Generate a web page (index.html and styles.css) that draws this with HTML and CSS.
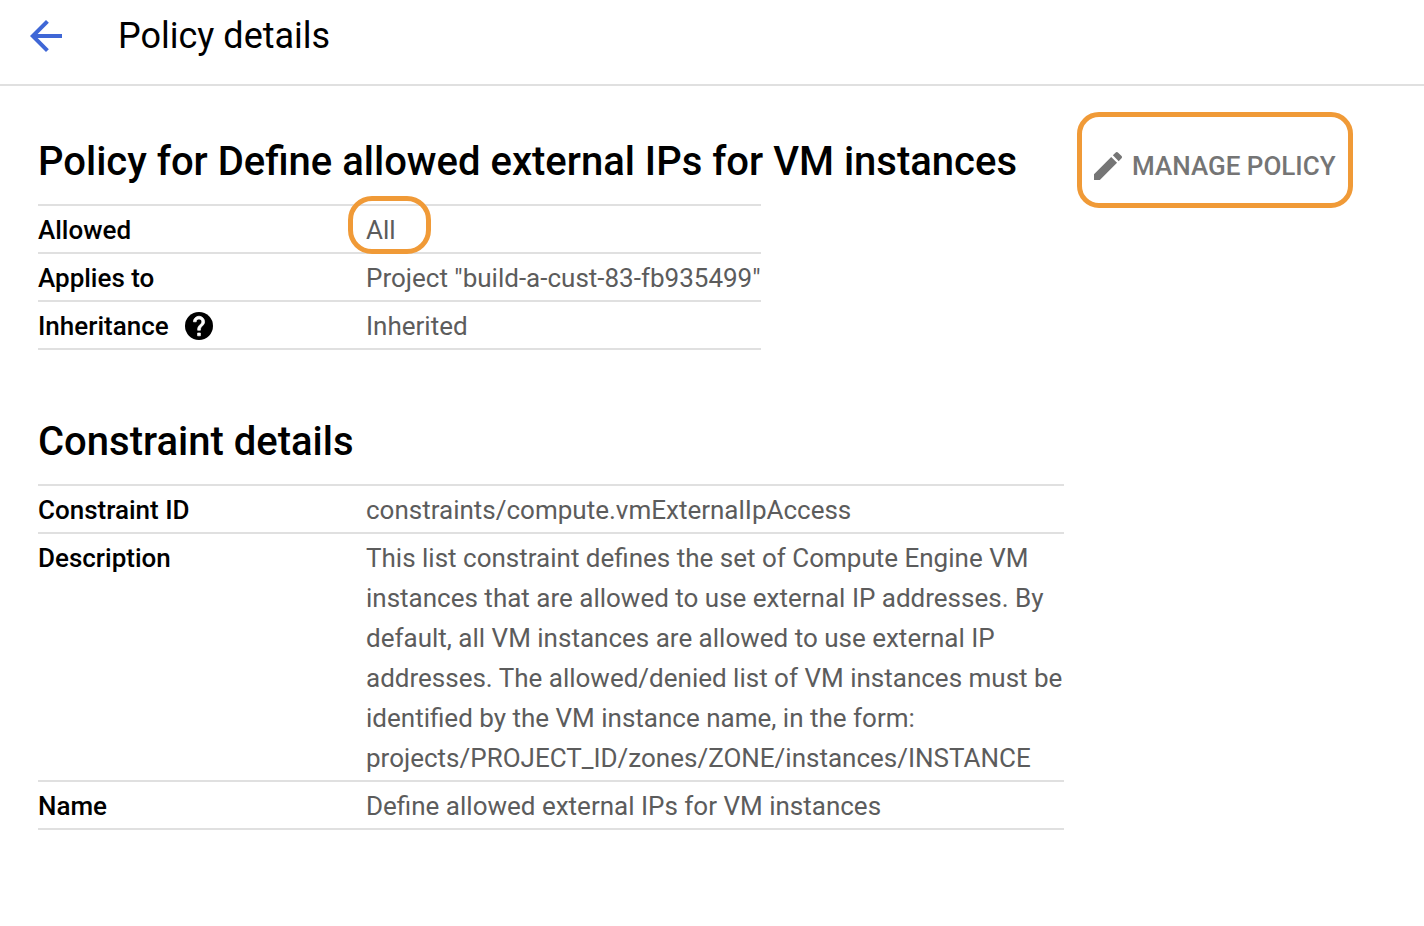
FILE: index.html
```html
<!DOCTYPE html>
<html lang="en">
<head>
<meta charset="utf-8">
<title>Policy details</title>
<link rel="stylesheet" href="styles.css">
</head>
<body>
<header class="topbar">
  <a class="back" href="#" aria-label="Back">
    <svg width="32" height="32" viewBox="4 4 16 16" fill="currentColor"><path d="M20 11H7.83l5.59-5.59L12 4l-8 8 8 8 1.41-1.41L7.83 13H20v-2z"/></svg>
  </a>
  <h1 class="title">Policy details</h1>
</header>
<main class="content">
  <div class="details">
    <section class="section">
      <h2 class="heading">Policy for Define allowed external IPs for VM instances</h2>
      <table class="table">
        <tr><th scope="row">Allowed</th><td><span class="marked">All<span class="ring"></span></span></td></tr>
        <tr><th scope="row">Applies to</th><td>Project "build-a-cust-83-fb935499"</td></tr>
        <tr><th scope="row"><span class="label">Inheritance
          <button class="help" type="button" aria-label="Help"><svg width="28" height="28" viewBox="2 2 20 20"><circle cx="12" cy="12" r="10" fill="currentColor"/><path d="M13 19h-2v-2h2zM15.070 11.250l-.9.920C13.450 12.900 13 13.500 13 15h-2v-.5c0-1.100.45-2.100 1.170-2.830l1.240-1.260c.37-.36.59-.86.59-1.410 0-1.100-.9-2-2-2s-2 .9-2 2H8c0-2.210 1.790-4 4-4s4 1.790 4 4c0 .88-.36 1.680-.93 2.250z" fill="#fff" stroke="#fff" stroke-width=".5"/></svg></button>
        </span></th><td>Inherited</td></tr>
      </table>
    </section>
    <section class="section">
      <h2 class="heading">Constraint details</h2>
      <table class="table">
        <tr><th scope="row">Constraint ID</th><td>constraints/compute.vmExternalIpAccess</td></tr>
        <tr><th scope="row">Description</th><td>This list constraint defines the set of Compute Engine VM instances that are allowed to use external IP addresses. By default, all VM instances are allowed to use external IP addresses. The allowed/denied list of VM instances must be identified by the VM instance name, in the form: projects/PROJECT_ID/zones/ZONE/instances/INSTANCE</td></tr>
        <tr><th scope="row">Name</th><td>Define allowed external IPs for VM instances</td></tr>
      </table>
    </section>
  </div>
  <button class="manage" type="button">
    <svg width="28" height="28" viewBox="3 3 18 18" fill="currentColor"><path d="M3 17.250V21h3.750L17.810 9.940l-3.750-3.750L3 17.250zM20.710 7.040c.39-.39.39-1.020 0-1.410l-2.340-2.340c-.39-.39-1.020-.39-1.410 0l-1.830 1.830 3.750 3.750 1.830-1.830z"/></svg>
    MANAGE POLICY
  </button>
</main>
</body>
</html>
```
FILE: styles.css
```css
* { box-sizing: border-box; }
body {
  margin: 0;
  background: #fff;
  color: #000;
  font-family: Roboto, "Liberation Sans", sans-serif;
  font-size: 26px;
  line-height: 40px;
}
svg { display: block; }
button { font: inherit; cursor: pointer; }
.topbar {
  display: flex;
  align-items: center;
  gap: 56px;
  padding: 16px 30px 28px;
  border-bottom: 2px solid #e0e0e0;
}
.back { color: #3f67d6; }
.title { margin: 0; font-size: 36px; font-weight: 400; line-height: 40px; }
.content {
  display: flex;
  align-items: flex-start;
  gap: 13px;
  padding: 26px 38px;
}
.details { max-width: 1026px; }
.section { padding-top: 24px; margin-bottom: 42px; }
.heading { margin: 0 0 16px; font-size: 40px; font-weight: 500; line-height: 52px; }
.table { border-collapse: collapse; border-top: 2px solid #e0e0e0; }
.table tr { border-bottom: 2px solid #e0e0e0; }
.table th, .table td { padding: 4px 0 2px; text-align: left; vertical-align: top; }
.table th { min-width: 328px; font-weight: 500; white-space: nowrap; }
.table td { color: #5c5c5c; }
.label { display: flex; align-items: center; gap: 16px; }
.help { padding: 0; border: 0; background: none; color: #000; }
.marked { position: relative; }
.ring {
  position: absolute;
  inset: -19px -35px -9px -18px;
  border: 5px solid #f09a37;
  border-radius: 24px;
}
.manage {
  display: flex;
  flex: none;
  align-items: center;
  gap: 10px;
  padding: 29px 12px 17px;
  border: 5px solid #f09a37;
  border-radius: 22px;
  background: none;
  color: #757575;
  font-weight: 500;
}
```
